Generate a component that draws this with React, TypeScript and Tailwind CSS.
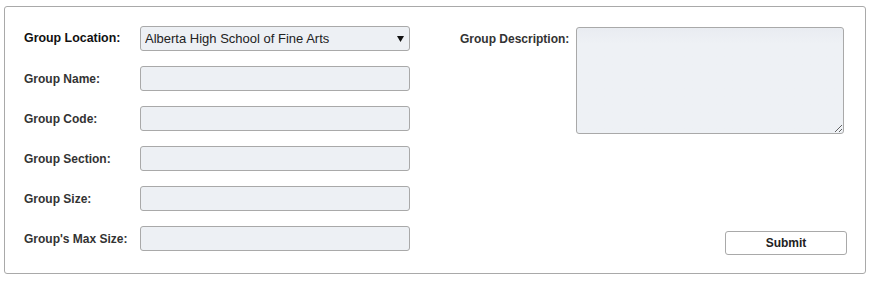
import React from 'react';

const fields = ['Group Name:', 'Group Code:', 'Group Section:', 'Group Size:', "Group's Max Size:"];

const inputClass =
  'h-[25px] w-[270px] rounded-[3px] border border-[#a9a9a9] bg-[#edf0f4] px-1 text-[13px] outline-none';

export default function App() {
  return (
    <div className="h-[281px] w-[872px] bg-white pt-[6px] pl-[4px] font-['Liberation_Sans',Arial,sans-serif]">
      <div className="flex h-[268px] w-[862px] rounded-[3px] border border-[#a9a9a9] pt-[19px] pl-[19px] pb-[17px]">
        {/* left column */}
        <div className="flex flex-col gap-[15px]">
          <div className="flex items-center">
            <label className="w-[116px] text-[12.4px] font-bold text-[#111]">Group Location:</label>
            <div className="relative">
              <select
                defaultValue="ahsfa"
                className={inputClass + ' appearance-none text-[#222]'}
              >
                <option value="ahsfa">Alberta High School of Fine Arts</option>
              </select>
              <svg
                className="pointer-events-none absolute right-[6px] top-[10px]"
                width="7"
                height="6"
                viewBox="0 0 7 6"
              >
                <path d="M0 0h7L3.5 6z" fill="#111" />
              </svg>
            </div>
          </div>
          {fields.map((f) => (
            <div key={f} className="flex items-center">
              <label className="w-[116px] text-[12px] font-bold text-[#333]">{f}</label>
              <input type="text" className={inputClass} />
            </div>
          ))}
        </div>

        {/* right column */}
        <div className="ml-[50px] flex w-[387px] flex-col">
          <div className="flex">
            <label className="w-[116px] pt-[4px] text-[12px] font-bold text-[#333]">Group Description:</label>
            <textarea className="mt-[1px] h-[107px] w-[268px] rounded-[3px] border border-[#a9a9a9] bg-linear-to-b from-[#e9ecf1] to-[#eef1f5] to-[15%] outline-none" />
          </div>
          <button
            type="button"
            className="mt-auto mb-[1px] self-end h-[24px] w-[122px] rounded-[3px] border border-[#a9a9a9] bg-white text-[12px] font-bold text-[#222]"
          >
            Submit
          </button>
        </div>
      </div>
    </div>
  );
}
